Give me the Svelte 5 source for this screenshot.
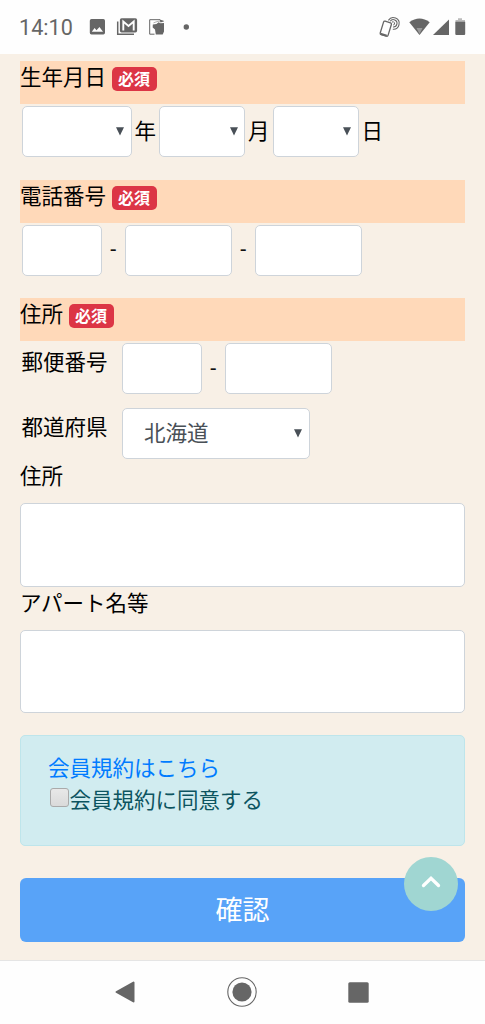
<script>
  const dateUnits = [
    { unit: '年', width: 110 },
    { unit: '月', width: 86 },
    { unit: '日', width: 86 },
  ];
</script>

{#snippet arrow()}
  <svg class="arrow" width="8" height="9" viewBox="0 0 8 9"><path d="M0 .3H8L4 8.6Z" fill="#495057" /></svg>
{/snippet}

{#snippet heading(title)}
  <h2><span>{title}</span><b class="badge">必須</b></h2>
{/snippet}

<div class="screen">
  <header>
    <span class="clock">14:10</span>
    <svg class="icons" width="110" height="54" viewBox="84 0 110 54" fill="#666">
      <path fill-rule="evenodd" d="M91.500 19H103.300Q105 19 105 20.700V32.800Q105 34.500 103.300 34.500H91.500Q89.800 34.500 89.800 32.800V20.700Q89.800 19 91.500 19ZM91.800 31.800H103L99.500 27L96.500 30.300L94.600 28Z" />
      <path d="M117.700 21.500V34.200H134" fill="none" stroke="#666" stroke-width="1.500" />
      <rect x="119.900" y="18.200" width="17.200" height="14.200" rx="1.700" />
      <path d="M123.300 30.500V21.500L128.500 26L133.700 21.500V30.500" fill="none" stroke="#fefefe" stroke-width="1.900" />
      <path d="M160 19.700H149.700V34.200H154.500" fill="none" stroke="#666" stroke-width="1" />
      <path d="M153.500 22.800L158 21.300L163.500 20.900" fill="none" stroke="#999" stroke-width=".8" />
      <path d="M159.500 19.300L164.200 21.300L160.500 22.500ZM152.800 24.500L156.500 23.900L158.500 22.200L160.500 23.300L164 22.900V31.500L162.700 34.500H155.800L155 29.500L152.700 27.500Z" />
      <circle cx="186.300" cy="27" r="2.700" />
    </svg>
    <svg class="signals" width="92" height="54" viewBox="376 0 92 54">
      <g fill="none" stroke="#666">
        <rect x="381.700" y="21.700" width="8.200" height="14" rx="1.300" stroke-width="1.300" transform="rotate(17 385.700 28.700)" />
        <path d="M380.500 33.700L386.700 35.700" stroke-width="2" />
        <path d="M388.400 20.400A5.800 5.800 0 1 1 392.800 29.200M390.200 21.300A3.700 3.700 0 1 1 393 27" stroke-width="1.100" />
        <path d="M391.900 22.200A1.600 1.600 0 1 1 393.200 25" stroke-width="1" />
      </g>
      <path d="M409.300 22.300Q419.500 14.800 429.700 22.300L419.500 35Z" fill="#666" />
      <path d="M416.500 28H422.500L419.500 34Z" fill="#999" />
      <path d="M449 19.500V35H433Z" fill="#666" />
      <path d="M458 18.200H462V20H465V22H455.500V20H458Z" fill="#bbb" />
      <path d="M455.300 21.700H465.200V34Q465.200 35 464.200 35H456.300Q455.300 35 455.300 34Z" fill="#666" />
    </svg>
  </header>

  <main>
    <section>
      {@render heading('生年月日')}
      <div class="row dates">
        {#each dateUnits as d}
          <div class="control select" style="width: {d.width}px">{@render arrow()}</div>
          <span class="unit">{d.unit}</span>
        {/each}
      </div>
    </section>
    <section>
      {@render heading('電話番号')}
      <div class="row">
        <div class="control small"></div>
        <span class="dash">-</span>
        <div class="control medium"></div>
        <span class="dash">-</span>
        <div class="control medium"></div>
      </div>
    </section>
    <section class="address">
      {@render heading('住所')}
      <div class="row">
        <span class="label">郵便番号</span>
        <div class="control small"></div>
        <span class="dash">-</span>
        <div class="control medium"></div>
      </div>
      <div class="row prefecture">
        <span class="label">都道府県</span>
        <div class="control select wide"><span class="value">北海道</span>{@render arrow()}</div>
      </div>
      <p>住所</p>
      <div class="control area"></div>
      <p class="apartment">アパート名等</p>
      <div class="control area"></div>
    </section>

    <div class="terms">
      <span class="link">会員規約はこちら</span>
      <div class="agree"><i class="check"></i><span>会員規約に同意する</span></div>
    </div>

    <div class="submit">確認
      <div class="to-top">
        <svg width="20" height="14" viewBox="0 0 20 14"><path d="M2.500 10.500L10 3.300L17.500 10.500" fill="none" stroke="#fff" stroke-width="3.300" stroke-linecap="round" /></svg>
      </div>
    </div>
  </main>

  <nav>
    <svg width="20" height="22" viewBox="0 0 20 22"><path d="M1.500 11L18.500 1.500V20.500Z" fill="#666" stroke="#666" stroke-width="2" stroke-linejoin="round" /></svg>
    <svg width="30" height="30" viewBox="0 0 30 30"><circle cx="15" cy="15" r="14.200" fill="none" stroke="#666" stroke-width="1.100" /><circle cx="15" cy="15" r="9.600" fill="#666" /></svg>
    <svg width="21" height="21" viewBox="0 0 21 21"><rect x=".3" y=".3" width="20.400" height="20.400" rx="1.500" fill="#666" /></svg>
  </nav>
</div>

<style>
  :global(body) { margin: 0; }
  .screen {
    box-sizing: border-box;
    width: 485px;
    height: 1024px;
    display: flex;
    flex-direction: column;
    background: #f8f0e6;
    color: #000;
    font: 21.500px/32px "Noto Sans CJK JP", sans-serif;
    overflow: hidden;
  }
  .screen * { box-sizing: border-box; }
  svg { display: block; flex: none; }
  header { height: 54px; flex: none; display: flex; background: #fefefe; }
  .clock { width: 65px; margin-left: 19px; font: 21.600px/56px Roboto, sans-serif; color: #666; }
  .signals { margin-left: auto; margin-right: 17px; }
  main { flex: 1; padding: 7px 20px 0; }
  section { height: 118.500px; }
  section.address { height: 437px; }
  h2 {
    margin: 0 0 2px;
    height: 43px;
    display: flex;
    align-items: flex-start;
    font: inherit;
    line-height: 30px;
    background: #ffd9b9;
  }
  .badge {
    margin: 6px 0 0 5.500px;
    width: 45px;
    height: 24px;
    border-radius: 5px;
    background: #dc3545;
    color: #fff;
    text-align: center;
    font-size: 16px;
    line-height: 22px;
    font-weight: 700;
  }
  .row { display: flex; height: 51px; padding-left: 1.500px; align-items: center; }
  .control {
    height: 51px;
    flex: none;
    background: #fff;
    border: 1.400px solid #ced4da;
    border-radius: 5px;
  }
  .small { width: 80.500px; }
  .medium { width: 107.500px; }
  .select { display: flex; align-items: center; justify-content: flex-end; padding-right: 6.500px; color: #495057; }
  .wide { width: 188px; justify-content: space-between; padding-left: 21.500px; }
  .value { padding-bottom: 4px; }
  .unit { width: 27.500px; padding: 0 0 4px 3px; }
  .dash { width: 22.500px; text-align: center; color: #111; font-family: Roboto, sans-serif; }
  .label { width: 100px; height: 45px; padding-top: 2px; line-height: 32px; margin-top: -6px; }
  .prefecture { margin-top: 14px; }
  .area { height: 83.500px; }
  p { margin: 0 0 13px; line-height: 31px; }
  .apartment { margin-bottom: 13px; line-height: 30px; }
  .terms {
    height: 110.500px;
    padding: 15px 27px;
    border: 1.400px solid #bee5eb;
    border-radius: 5px;
    background: #d1ecf0;
    color: #0c5460;
  }
  .link { display: block; color: #007bff; }
  .agree { display: flex; }
  .check {
    width: 19px;
    height: 19px;
    margin: 5px 1px 0 1.500px;
    border: 1.500px solid #aaa;
    border-radius: 3px;
    background: linear-gradient(#e8e8e8, #dadada);
  }
  .submit {
    position: relative;
    height: 64.500px;
    margin-top: 32px;
    border-radius: 6px;
    background: #58a3f8;
    color: #fff;
    text-align: center;
    font-size: 27px;
    line-height: 62px;
  }
  .to-top {
    position: absolute;
    right: 7px;
    top: -21px;
    width: 54px;
    height: 54px;
    border-radius: 50%;
    background: #a0d6d2;
    display: flex;
    align-items: center;
    justify-content: center;
    padding-bottom: 4px;
  }
  nav {
    flex: none;
    height: 64.500px;
    border-top: 1.500px solid #e5e5e5;
    background: #fefefe;
    display: flex;
    align-items: center;
    justify-content: space-between;
    padding: 0 116px 0 115px;
  }
</style>
